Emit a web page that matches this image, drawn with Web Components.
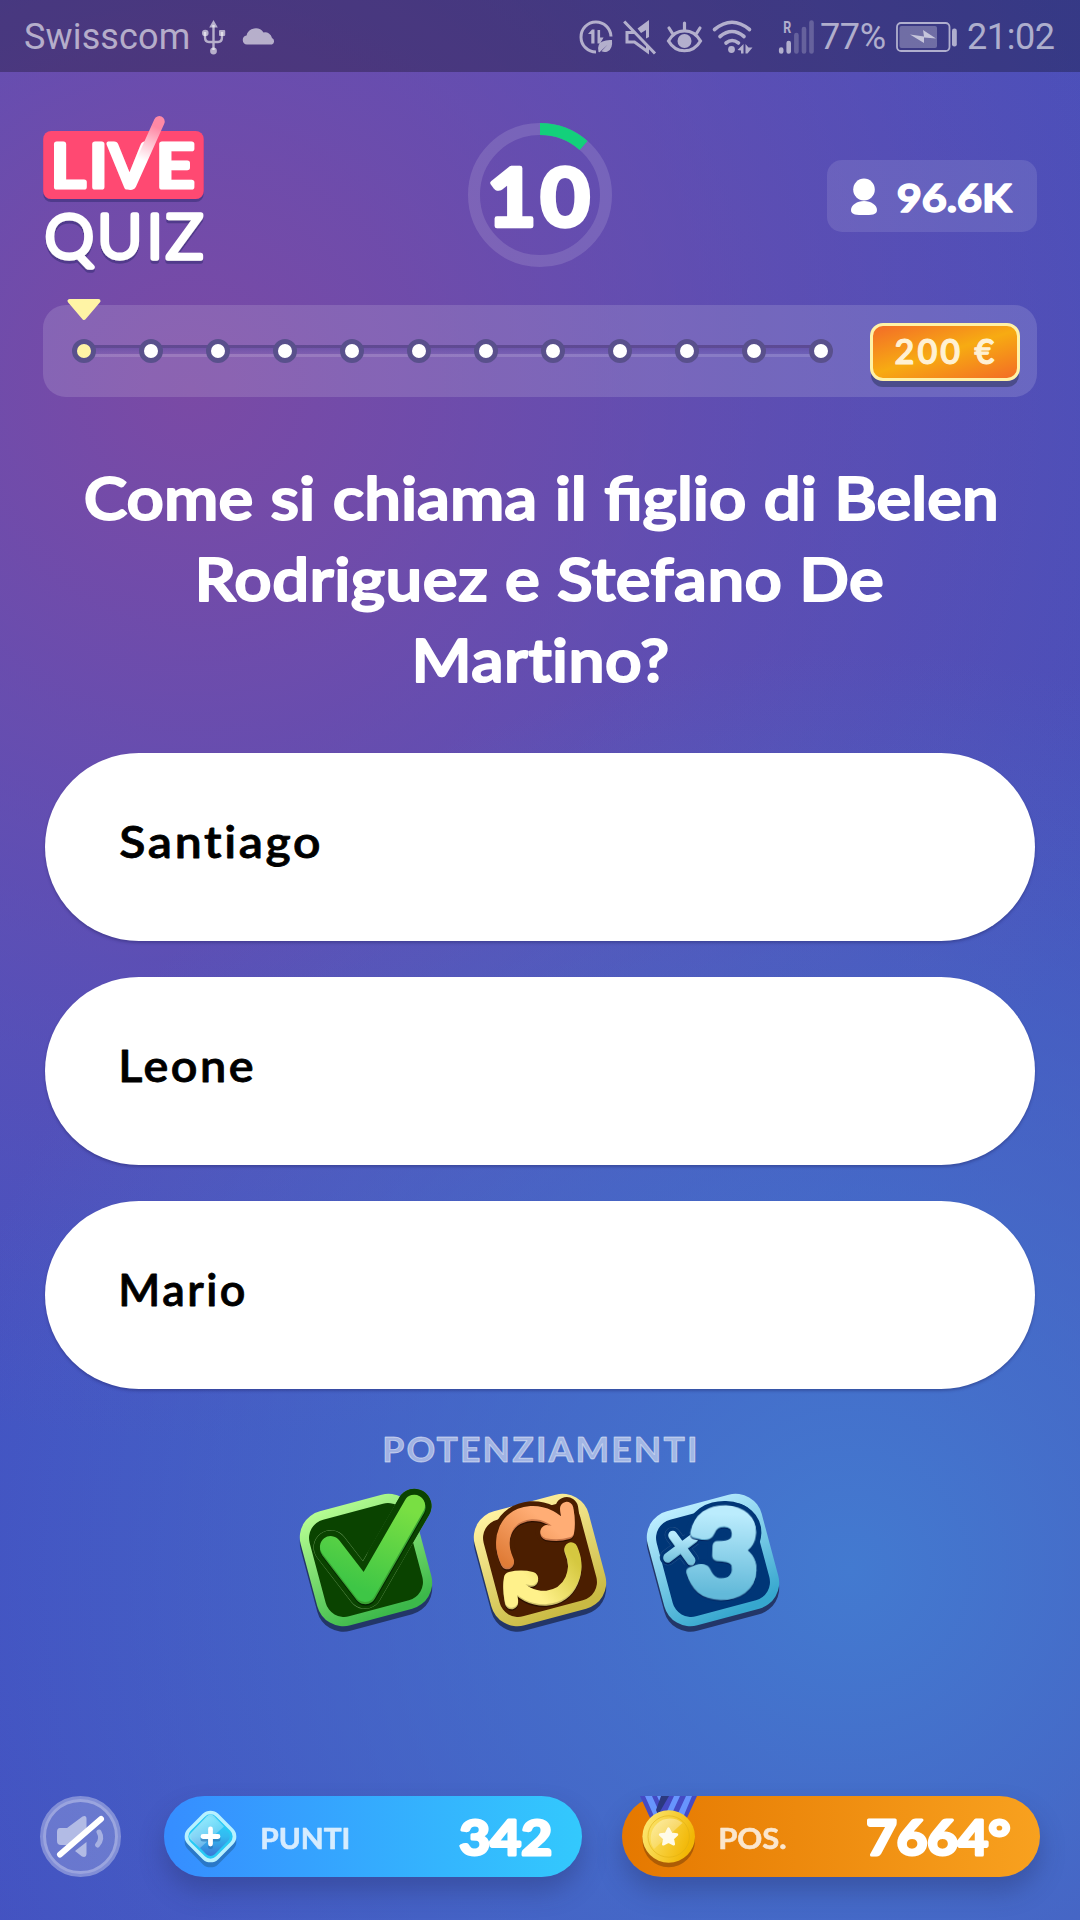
<!DOCTYPE html>
<html lang="it">
<head>
<meta charset="utf-8">
<title>Live Quiz</title>
<style>
html, body { margin: 0; padding: 0; }
body { width: 1080px; height: 1920px; overflow: hidden; font-family: Lato, "Open Sans", sans-serif; }
</style>
</head>
<body>
<quiz-app></quiz-app>
<script>
const define = (name, html, setup) => {
  const tpl = document.createElement('template');
  tpl.innerHTML = html;
  customElements.define(name, class extends HTMLElement {
    connectedCallback() {
      if (this.shadowRoot) return;
      this.attachShadow({ mode: 'open' }).append(tpl.content.cloneNode(true));
      if (setup) setup(this, this.shadowRoot);
    }
  });
};

/* Text set to an exact ink width (w) and cap height (cap), with softened corners. */
const ctx = document.createElement('canvas').getContext('2d');
define('round-text', `
<style>
:host { display: block; flex: none; }
svg { display: block; overflow: visible; }
text { font-family: Lato, sans-serif; stroke: currentColor; fill: currentColor; stroke-linejoin: round; }
</style>
<svg><text></text></svg>`, (el, root) => {
  const a = (n, d) => parseFloat(el.getAttribute(n) ?? d);
  const w = a('w'), cap = a('cap'), sw = a('soft', 1.5), weight = a('weight', 700), ls = a('spacing', 0), ws = a('words', 0);
  const value = el.getAttribute('value');
  const size = (cap - sw) / 0.72;
  ctx.font = weight + ' ' + size + 'px Lato';
  ctx.letterSpacing = ls + 'px';
  ctx.wordSpacing = ws + 'px';
  const m = ctx.measureText(value);
  const left = -m.actualBoundingBoxLeft, ink = m.actualBoundingBoxRight - left;
  const k = (w - sw) / ink;
  const svg = root.querySelector('svg'), t = root.querySelector('text');
  svg.setAttribute('width', w);
  svg.setAttribute('height', cap);
  t.textContent = value;
  t.setAttribute('transform', `translate(${sw / 2 - left * k} ${cap - sw / 2}) scale(${k} 1)`);
  t.setAttribute('style', `font-size:${size}px;font-weight:${weight};letter-spacing:${ls}px;word-spacing:${ws}px;stroke-width:${sw}px`);
});

define('status-bar', `
<style>
:host { display: flex; height: 72px; box-sizing: border-box; padding: 2px 24px 0 24px; align-items: center;
  background: rgba(0,0,0,.28); color: rgba(255,255,255,.6); font: 36px/72px Roboto, sans-serif; }
svg { display: block; flex: none; overflow: visible; }
.op { width: 166px; margin-right: 11px; letter-spacing: .15px; }
.sp { flex: 1; }
.i { fill: none; stroke: currentColor; }
.f { fill: currentColor; stroke: none; }
.pc { width: 66px; margin: 0 10px 0 5px; letter-spacing: -.4px; }
.tm { margin-left: 9px; width: 89px; white-space: nowrap; letter-spacing: -.4px;}
</style>
<span class="op">Swisscom</span>
<svg width="26" height="36" viewBox="0 0 26 36" class="i" stroke-width="2.4"><path d="M12.5 6V31M4 13v5q0 5 4 5h9q4 0 4-5v-5"/><path class="f" d="M12.5 1l4.3 7.500h-8.600z"/><circle class="f" cx="12.500" cy="32" r="3.400"/><circle class="f" cx="4.300" cy="14" r="3.300"/><rect class="f" x="18" y="11" width="6.200" height="6" rx="1"/></svg>
<svg width="34" height="20" viewBox="0 0 34 20" style="margin:-2px 0 0 15px" class="f"><path d="M5 18.500a4.600 4.600 0 0 1-.5-9.100A9.500 9.500 0 0 1 21.500 6.500a7 7 0 0 1 8.500 5.600 3.500 3.500 0 0 1 0 6.400z"/></svg>
<span class="sp"></span>
<svg width="34" height="36" viewBox="0 0 34 36" class="i" stroke-width="3"><path d="M32 17.500A15 15 0 1 0 17 33" /><path class="f" d="M9 15l4-4.500h2.500V24.500H12.300V15zM18.500 11h2.600v7.500h3.500l-3.500 6h-2.600z"/><path class="f" d="M19.500 33q-2-8 4-10.500 4-2 9.500-1.500 1 9-4.500 11.500-3 1.300-6-.2l6-6.500-8 7.500z"/></svg>
<svg width="34" height="36" viewBox="0 0 34 36" style="margin-left:10px" class="i" stroke-width="3"><path d="M1.200 2.500L32 34.500M12 13.500H4v9.500h7.500L24.500 32.500V27"/><path class="f" d="M14.500 9.500L26 1v17l-3 1.500V11l-5 3z"/></svg>
<svg width="38" height="36" viewBox="0 0 38 36" style="margin-left:9px" class="i" stroke-width="3.200" stroke-linecap="round"><path d="M2.500 22C10 8.500 27 8.500 34.500 22 27 35 10 35 2.500 22zM18.500 4v7M3 9l3.500 5.500M34 9l-3.500 5.500"/><circle class="f" cx="18.500" cy="22" r="7"/></svg>
<svg width="42" height="36" viewBox="0 0 42 36" style="margin-left:8px" class="i" stroke-width="3.600" stroke-linecap="round"><path d="M2.500 10.500Q20 -4 37.500 10.500M8 17.500Q20 7.500 32 17.500M14 24q6-5 12.500 0"/><circle class="f" cx="19.500" cy="30.500" r="3.400"/><path class="f" d="M25.500 31l6-6v9.500h-2.500v-3zM33.500 25v9.500h2l5-6h-4z"/></svg>
<svg width="37" height="36" viewBox="0 0 37 36" style="margin-left:24px"><g stroke="currentColor" stroke-linecap="round" stroke-width="4.600"><path d="M3.200 30.500v2M10.700 24v8.500"/><g opacity=".35"><path d="M18.400 16v16.500M26 10v22.500M33.500 3.500v29"/></g></g><text x="5.300" y="13.500" font-family="Roboto" font-weight="700" font-size="17" textLength="8" lengthAdjust="spacingAndGlyphs" fill="currentColor">R</text></svg>
<span class="pc">77%</span>
<svg width="62" height="34" viewBox="0 0 62 34"><rect x="1" y="3" width="52.500" height="28" rx="4" fill="none" stroke="currentColor" stroke-width="1.800"/><rect x="3.500" y="6" width="37.500" height="22" rx="2" fill="currentColor" opacity=".45"/><path d="M14 14.500l14 2-1-6.500L40 18.500l-12-1 0 5.500z" fill="currentColor"/><rect x="56" y="8.500" width="4.800" height="18" rx="2.200" fill="currentColor"/></svg>
<span class="tm">21:02</span>`);

define('live-logo', `
<style>:host { display: block; } svg { display: block; overflow: visible; }
text { font-family: Lato, sans-serif; fill: #fff; stroke: #fff; stroke-linejoin: round; }</style>
<svg width="161" height="156" viewBox="43 117 161 156">
<defs><linearGradient id="arm" gradientUnits="userSpaceOnUse" x1="142" y1="160" x2="156" y2="127"><stop offset="0" stop-color="#fff"/><stop offset="1" stop-color="#ff89a5"/></linearGradient>
<clipPath id="left"><path d="M98 130H155L131 184V200H98z"/></clipPath>
<filter id="sh" x="-20%" y="-20%" width="140%" height="140%"><feDropShadow dx="0" dy="3" stdDeviation=".6" flood-color="#40307a" flood-opacity=".65"/></filter></defs>
<rect x="43.200" y="131" width="160.500" height="68" rx="8" fill="#ff4872" filter="url(#sh)"/>
<g font-weight="400" font-size="60.500" stroke-width="5.200"><text transform="scale(1.1 1)" x="46.100 80.900" y="187.400">LI</text>
<text x="109" y="187.400" clip-path="url(#left)">V</text><text transform="scale(1.1 1)" x="141.800" y="187.400">E</text></g>
<path d="M131 184.500L159.300 121.500" stroke="url(#arm)" stroke-width="10.800" stroke-linecap="round"/>
<g font-weight="300" font-size="62" stroke-width="5.400" filter="url(#sh)"><text x="44.800 97.300 146.800 166" y="258">QUIZ</text></g>
</svg>`);

define('count-ring', `
<style>:host { display: grid; place-items: center; width: 144px; height: 144px; color: #fff; }
:host > * { grid-area: 1 / 1; }</style>
<svg width="144" height="144" fill="none" stroke-width="12"><circle cx="72" cy="72" r="66" stroke="#fff" stroke-opacity=".13"/><path d="M72 6A66 66 0 0 1 115.600 22.500" stroke="#13d07b"/></svg>
<round-text value="10" w="101" cap="63" weight="700" soft="4.500" spacing="4" style="margin-top:3px"></round-text>`);

define('viewer-badge', `
<style>:host { display: flex; box-sizing: border-box; width: 210px; height: 72px; padding: 0 24px; align-items: center; gap: 20px; border-radius: 15px; background: rgba(255,255,255,.11); color: #fff; }</style>
<svg width="26" height="38" fill="#fff"><ellipse cx="13" cy="12.500" rx="10.800" ry="11"/><path d="M0 33C0 28 6 24 13 24s13 4 13 9-6 5-13 5-13 0-13-5z"/></svg>
<round-text value="96.6K" w="116" cap="29.500" weight="700" soft="1.600" style="margin-top:4px"></round-text>`);

define('prize-track', `
<style>:host { display: flex; position: relative; box-sizing: border-box; height: 92px; padding: 0 17px 0 29px; align-items: center; justify-content: space-between; border-radius: 23px; background: rgba(255,255,255,.14); }
.track { display: flex; justify-content: space-between; align-items: center; width: 761px; height: 24px; 
 background: linear-gradient(#57438acc 0 3px, #5c46a088 3px, #5c46a033 9px, #ffffff24 9px 12px) no-repeat 12px 6px / 737px 12px; }
i { width: 14px; height: 14px; border: 5px solid #59508c; border-radius: 50%; background: #fff; }
i:first-child { background: #fff4a5; }
.mark { position: absolute; left: 23px; top: -7px; }
.prize { display: flex; box-sizing: border-box; width: 150px; height: 58px; margin-top: 2px; align-items: center; justify-content: center; border: 3px solid #fff2a6; border-radius: 13px; color: #fff1d3;
 background: linear-gradient(163deg, #f36c28, #f7ab12 50%, #f36c25); box-shadow: 0 7px 0 -1px #4b4c8b; }</style>
<svg class="mark" width="36" height="24"><path d="M3.500 3H32.500L18 20z" fill="#fff4a5" stroke="#fff4a5" stroke-width="4" stroke-linejoin="round"/></svg>
<div class="track"></div>
<div class="prize"><round-text value="200 €" w="100" cap="26" weight="600" soft="1.200" spacing="3"></round-text></div>`, (el, root) => {
  root.querySelector('.track').append(...Array.from({ length: 12 }, () => document.createElement('i')));
});

define('quiz-question', `
<style>:host { display: flex; flex-direction: column; align-items: center; gap: 36px; color: #fff; }</style>
<round-text value="Come si chiama il figlio di Belen" w="911" cap="45" weight="600" soft="2" words="1"></round-text>
<round-text value="Rodriguez e Stefano De" w="684" cap="45" weight="600" soft="2" spacing=".4" style="margin-left:2px"></round-text>
<round-text value="Martino?" w="252" cap="45" weight="600" soft="2" spacing=".4" style="margin-left:3px"></round-text>`);

define('answer-option', `
<style>:host { display: flex; box-sizing: border-box; height: 188px; padding: 0 0 10px 75px; align-items: center; border-radius: 94px; background: #fff; color: #000; box-shadow: 0 2px 3px rgba(30,30,90,.35); }</style>
<slot></slot>`);

const tile = (light, dark, inner, body) => `
<style>:host { display: block; } svg { display: block; overflow: visible; }
text { font-family: Lato, sans-serif; font-weight: 700; stroke-linejoin: round; }</style>
<svg width="160" height="160" viewBox="0 0 160 160" fill="none" stroke-linecap="round" stroke-linejoin="round">
<defs><linearGradient id="rim" x1=".3" y1="0" x2=".5" y2="1"><stop offset="0" stop-color="${light}"/><stop offset="1" stop-color="${dark}"/></linearGradient></defs>
<g transform="rotate(-15 80 85.500)"><rect x="21" y="26.500" width="118" height="118" rx="27" fill="#233668"/></g>
<g transform="rotate(-15 80 80)"><rect x="21" y="21" width="118" height="118" rx="27" fill="url(#rim)"/><rect x="30" y="30" width="100" height="100" rx="19" fill="${inner}"/></g>
${body}</svg>`;

const tick = 'M44.700 67.300L79 111.700L128.300 26';
define('power-check', tile('#b4fc91', '#3cb84a', '#0a4300', `
<defs><linearGradient id="g" x1=".8" y1="0" x2=".4" y2="1"><stop offset="0" stop-color="#79df43"/><stop offset="1" stop-color="#3ec646"/></linearGradient></defs>
<path d="${tick}" stroke="#6b9a59" stroke-width="34.500"/><path d="${tick}" stroke="#0a4300" stroke-width="33.800"/>
<path d="M98 78L128.300 26" stroke="#0a4300" stroke-width="34.500"/>
<path d="${tick}" stroke="#032400" stroke-width="22" transform="translate(.5 3)"/><path d="${tick}" stroke="#39a332" stroke-width="22" transform="translate(.3 1.500)"/>
<path d="${tick}" stroke="url(#g)" stroke-width="21.500" transform="translate(0 -.5)"/>`));

const arcA = 'M47.300 81C37 59 45 35 71 32.700C86 32 96 39 105 49M106.700 28.500Q109 40 107.500 51Q98 54 87 51.700';
const arcB = 'M111 69C120 89 112 115 86 117.500C70 118 60 110 53 101M51.500 121Q49 109 50.500 98.500Q61 96 71.500 98.500';
define('power-swap', tile('#fff1a0', '#c9ba43', '#4b1e00', `
<defs><linearGradient id="o" x1="1" y1="0" x2="0" y2="1"><stop offset=".3" stop-color="#ffad75"/><stop offset="1" stop-color="#e07c37"/></linearGradient>
<linearGradient id="y" x1="0" y1=".8" x2="1" y2=".2"><stop offset=".3" stop-color="#fff18b"/><stop offset="1" stop-color="#d5c840"/></linearGradient></defs>
<path d="${arcA}" stroke="#4b1e00" stroke-width="23"/>
<g stroke-width="13.300"><g stroke="#2c1000"><path d="${arcA}" transform="translate(0 3)"/><path d="${arcB}" transform="translate(0 3)"/></g>
<path d="${arcA}" stroke="#c9774a" transform="translate(0 1.700)"/><path d="${arcB}" stroke="#cdc06a" transform="translate(0 1.700)"/>
<path d="${arcA}" stroke="url(#o)"/><path d="${arcB}" stroke="url(#y)"/></g>`));

const three = 'font-size="114" transform="translate(53.500 112.500) rotate(2) scale(1.060 1)"';
const cross = 'M39.700 55L58 80M61.300 57.300L34.700 77.300';
define('power-triple', tile('#bbedff', '#36a7ce', '#003677', `
<defs><linearGradient id="b" gradientUnits="userSpaceOnUse" x1="0" y1="-80" x2="0" y2="0"><stop offset="0" stop-color="#bbecfd"/><stop offset="1" stop-color="#62b9d9"/></linearGradient>
<linearGradient id="c" x1="0" y1="0" x2="0" y2="1"><stop offset="0" stop-color="#b9ebfd"/><stop offset="1" stop-color="#79c4df"/></linearGradient></defs>
<path d="${cross}" stroke="#2d568a" stroke-width="16"/><path d="${cross}" stroke="#003677" stroke-width="15.300"/>
<text ${three} fill="#003677" stroke="#003677" stroke-width="19">3</text>
<path d="${cross}" stroke="#001f5a" stroke-width="8.700" transform="translate(0 2.500)"/><path d="${cross}" stroke="#6ab0cc" stroke-width="8.700" transform="translate(0 1.200)"/><path d="${cross}" stroke="url(#c)" stroke-width="8.700"/>
<text ${three} fill="url(#b)" stroke="url(#b)" stroke-width="9" style="filter:drop-shadow(0 1px 0 #5aa7c9) drop-shadow(0 1.500px 0 #001f5a)" aria-hidden="true">3</text>`));

define('sound-toggle', `
<style>:host { display: block; } svg { display: block; }</style>
<svg width="81" height="81" fill="none"><circle cx="40.500" cy="40.500" r="37.500" fill="#fff" fill-opacity=".2"/><circle cx="40.500" cy="40.500" r="37.500" stroke="#fff" stroke-opacity=".33" stroke-width="6"/>
<g fill="#b2bbe5"><path d="M20 32h7L42.500 20.500Q46.500 19 46.500 23V35L27 49H21q-4 0-4-4V36q0-4 3-4zM46.500 46V58Q46 62 42 60.500L35 55z"/></g><path d="M59 36q4 7-1.500 13" stroke="#a7b1e2" stroke-width="5" stroke-linecap="round"/>
<path d="M20 58.500L61 23" stroke="#fff" stroke-width="6" stroke-linecap="round"/></svg>`);

define('stat-pill', `
<style>:host { display: flex; box-sizing: border-box; width: 418px; height: 81px; align-items: center; border-radius: 41px; color: #fff; box-shadow: 0 14px 24px rgba(40,50,110,.38); }
:host([kind="points"]) { padding: 0 30px 0 16px; background: linear-gradient(90deg, #368dff, #33c9fd); }
:host([kind="rank"]) { padding: 0 30px 0 16px; background: linear-gradient(90deg, #e57800, #f8a11f); }
.label { flex: 1; padding: 5px 0 0 21px; opacity: .8; }
::slotted(round-text:not([slot])) { margin-top: 2px; }
</style>
<slot name="icon"></slot><div class="label"><slot name="label"></slot></div><slot></slot>`);

define('points-gem', `
<style>:host { display: block; } svg { display: block; overflow: visible; }</style>
<svg width="61" height="81" viewBox="0 0 61 81"><defs><linearGradient id="d" x1="0" y1="0" x2="1" y2="1"><stop offset=".1" stop-color="#2fd3fa"/><stop offset=".5" stop-color="#33b9f0"/><stop offset="1" stop-color="#3b6fd2"/></linearGradient>
<linearGradient id="h" x1="0" y1="0" x2="1" y2="1"><stop offset="0" stop-color="#fff" stop-opacity=".8"/><stop offset="1" stop-color="#fff" stop-opacity=".15"/></linearGradient></defs>
<rect x="9" y="24" width="43" height="43" rx="11" transform="rotate(45 30.500 45.500)" fill="#2a78c8"/>
<rect x="9" y="19" width="43" height="43" rx="11" transform="rotate(45 30.500 40.500)" fill="#b8f1ff"/>
<rect x="12.500" y="22.500" width="36" height="36" rx="8" transform="rotate(45 30.500 40.500)" fill="#28c9f5"/>
<rect x="15" y="25" width="31" height="31" rx="6" transform="rotate(45 30.500 40.500)" fill="url(#d)"/>
<path d="M27 20q3.500-3 7 0l10 10.500L20 52 10.500 43.500q-3-3 0-6z" fill="url(#h)" opacity=".75"/>
<path d="M30.500 34v15M23 41.500h15" stroke="#2670b3" stroke-opacity=".6" stroke-width="5" stroke-linecap="round" transform="translate(0 1.500)"/><path d="M30.500 33v15M23 40.500h15" stroke="#fff" stroke-width="4.800" stroke-linecap="round"/></svg>`);

define('gold-medal', `
<style>:host { display: block; } svg { display: block; overflow: visible; }</style>
<svg width="61" height="81" viewBox="0 0 61 81"><defs><linearGradient id="m" x1="0" y1="0" x2="1" y2=".4"><stop offset="0" stop-color="#fdec7c"/><stop offset="1" stop-color="#f2b705"/></linearGradient>
<linearGradient id="s" x1="0" y1="0" x2=".3" y2="1"><stop offset="0" stop-color="#fff" stop-opacity=".7"/><stop offset="1" stop-color="#fff" stop-opacity=".25"/></linearGradient></defs>
<path d="M2 0H32L43 24H13z" fill="#454bc4"/><path d="M7 0h7l12 27h-7zM19 0h6l11 25h-6z" fill="#6795fd"/>
<path d="M28 0H59L48 24H17z" fill="#454bc4"/><path d="M36 0h6L31 24h-6zM48 0h6L44 24h-7z" fill="#6795fd"/><path d="M23 0h8L20 19l-2-5z" fill="#2c397f"/>
<circle cx="30.700" cy="45" r="26.200" fill="#ad5c05"/><circle cx="30.700" cy="40.500" r="26.300" fill="url(#m)"/><circle cx="30.700" cy="40.500" r="20.700" fill="none" stroke="#dfae12" stroke-opacity=".55"/>
<path d="M16 53A19.500 19.500 0 0 1 44.500 27Z" fill="url(#s)" opacity=".6"/>
<path d="M30.500 32.500l2.700 5.200 5.800.8-4.200 4.100 1 5.700-5.300-2.700-5.200 2.700 1-5.700-4.200-4.100 5.800-.8z" fill="#fffbe9" stroke="#fffbe9" stroke-width="2.500" stroke-linejoin="round"/></svg>`);

define('quiz-app', `
<style>
:host { display: flex; flex-direction: column; width: 1080px; height: 1920px; overflow: hidden;
 background: radial-gradient(circle 920px at 850px 1570px, #437ad0 0, #437ad0b8 25%, #437ad070 55%, #437ad000 100%), radial-gradient(circle 1050px at 190px 390px, #7a4aa5 0, #7a4aa5cc 22%, #7a4aa570 55%, #7a4aa500 100%), linear-gradient(100deg, #4254c4, #494fb9); }
header { display: grid; grid-template-columns: 1fr auto 1fr; align-items: center; padding: 45px 43px 0; height: 156px; }
header viewer-badge { justify-self: end; margin-top: 1px; }
prize-track { margin: 32px 43px 0; }
quiz-question { margin-top: 79px; }
.answers { display: flex; flex-direction: column; gap: 36px; margin: 69.500px 45px 0; }
.title { display: flex; justify-content: center; margin-top: 48.500px; color: rgba(255,255,255,.5); }
.powers { display: flex; justify-content: center; gap: 13px; margin-top: 18px; }
power-check { margin: 0 1px 0 -1px; }
footer { display: flex; align-items: center; margin: auto 40px 43px; }
stat-pill { margin-left: 40px; } sound-toggle + stat-pill { margin-left: 43px; }
</style>
<status-bar></status-bar>
<header><live-logo></live-logo><count-ring></count-ring><viewer-badge></viewer-badge></header>
<prize-track></prize-track>
<quiz-question></quiz-question>
<div class="answers">
<answer-option><round-text value="Santiago" w="200" cap="32" weight="600" soft=".8" spacing="2.400"></round-text></answer-option>
<answer-option><round-text value="Leone" w="132" cap="32" weight="600" soft=".8" spacing="2.400" style="margin-left:1px"></round-text></answer-option>
<answer-option><round-text value="Mario" w="124" cap="32" weight="600" soft=".8" spacing="2.400" style="margin-left:1px"></round-text></answer-option>
</div>
<div class="title"><round-text value="POTENZIAMENTI" w="312" cap="25" weight="700" soft=".9" spacing="2"></round-text></div>
<div class="powers"><power-check></power-check><power-swap></power-swap><power-triple></power-triple></div>
<footer><sound-toggle></sound-toggle>
<stat-pill kind="points"><points-gem slot="icon"></points-gem><round-text slot="label" value="PUNTI" w="87" cap="21.500" weight="700" soft=".6"></round-text><round-text value="342" w="93" cap="37" weight="700" soft="3"></round-text></stat-pill>
<stat-pill kind="rank"><gold-medal slot="icon"></gold-medal><round-text slot="label" value="POS." w="66" cap="21.500" weight="700" soft=".6"></round-text><round-text value="7664°" w="143" cap="37" weight="700" soft="3"></round-text></stat-pill></footer>`);
</script>
</body>
</html>
